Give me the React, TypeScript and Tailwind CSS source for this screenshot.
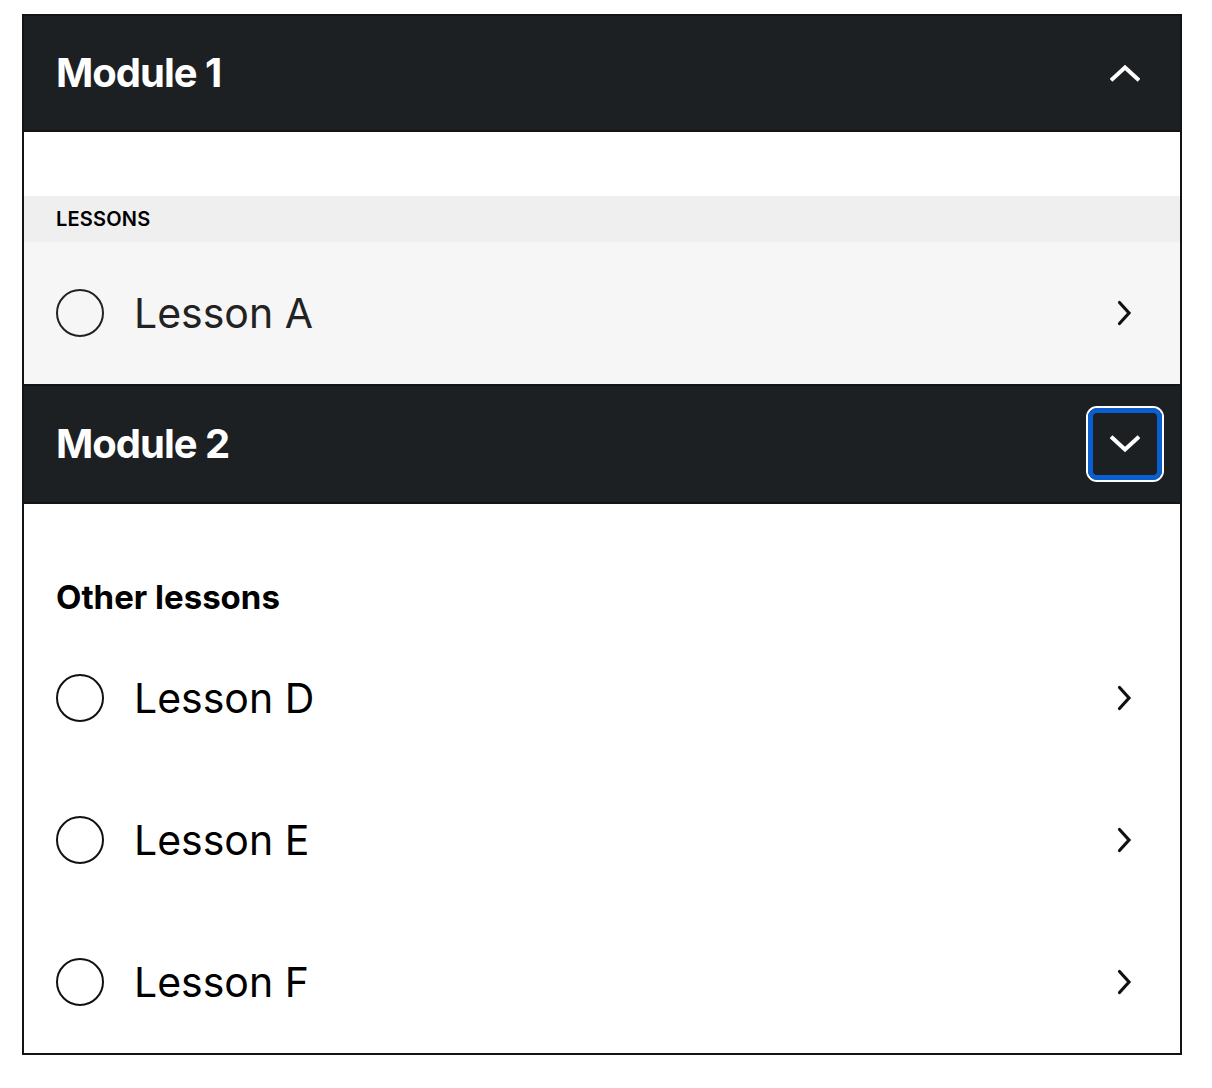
import React from 'react';

const FONT = { fontFamily: 'Inter, "Noto Sans", sans-serif' };

function Chevron({ dir }: { dir: 'up' | 'down' }) {
  return (
    <svg width="30" height="18" viewBox="0 0 30 18" fill="none">
      <path
        d={dir === 'up' ? 'M2.5 15 L15 3.5 L27.5 15' : 'M2.5 3 L15 14.5 L27.5 3'}
        stroke="white"
        strokeWidth="4"
        strokeLinecap="square"
        strokeLinejoin="miter"
      />
    </svg>
  );
}

function ChevronRight() {
  return (
    <svg width="16" height="26" viewBox="0 0 16 26" fill="none">
      <path d="M3.5 2.5 L13 13 L3.5 23.5" stroke="#111" strokeWidth="3.2" strokeLinecap="round" />
    </svg>
  );
}

function ModuleHeader({ title, expanded, focused }: { title: string; expanded: boolean; focused?: boolean }) {
  return (
    <div
      className={
        'bg-[#1d2023] border-b-2 border-[#121416] flex items-center justify-between pl-8 pr-[18px] ' +
        (focused ? 'h-[120px] border-t-2' : 'h-[116px]')
      }
    >
      <h2 className="text-[40px] font-bold text-white tracking-[-0.025em] leading-none">{title}</h2>
      <button
        className={
          'w-[74px] h-[72px] rounded-[9px] flex items-center justify-center border-solid ' +
          (focused ? 'border-[5px] border-[#0a5fd0] shadow-[0_0_0_2px_#ffffff]' : 'border-[5px] border-transparent')
        }
      >
        <Chevron dir={expanded ? 'up' : 'down'} />
      </button>
    </div>
  );
}

function LessonRow({ name, muted }: { name: string; muted?: boolean }) {
  return (
    <div className={'h-[142px] flex items-center pl-8 pr-[48px] ' + (muted ? 'bg-[#f6f6f6]' : 'bg-white')}>
      <div className={'w-12 h-12 rounded-full border-2 ' + (muted ? 'border-[#222]' : 'border-[#111]')} />
      <span className={'ml-[30px] text-[41px] font-normal leading-none ' + (muted ? 'text-[#222]' : 'text-black')}>{name}</span>
      <div className="ml-auto flex items-center">
        <ChevronRight />
      </div>
    </div>
  );
}

export default function App() {
  return (
    <div className="bg-white min-h-[1088px] pt-[14px]" style={FONT}>
      <div className="ml-[22px] w-[1160px] border-2 border-[#121416]">
        <section>
          <ModuleHeader title="Module 1" expanded />
          <div className="pt-16 bg-white">
            <div className="h-[46px] bg-[#efefef] flex items-center pl-8 text-[20px] font-semibold tracking-[0.01em] text-black">
              LESSONS
            </div>
            <LessonRow name="Lesson A" muted />
          </div>
        </section>
        <section>
          <ModuleHeader title="Module 2" expanded={false} focused />
          <div className="bg-white pt-[73px]">
            <h3 className="pl-8 text-[33px] font-bold leading-[40px] tracking-normal text-black mb-[10px]">Other lessons</h3>
            <LessonRow name="Lesson D" />
            <LessonRow name="Lesson E" />
            <LessonRow name="Lesson F" />
          </div>
        </section>
      </div>
    </div>
  );
}
